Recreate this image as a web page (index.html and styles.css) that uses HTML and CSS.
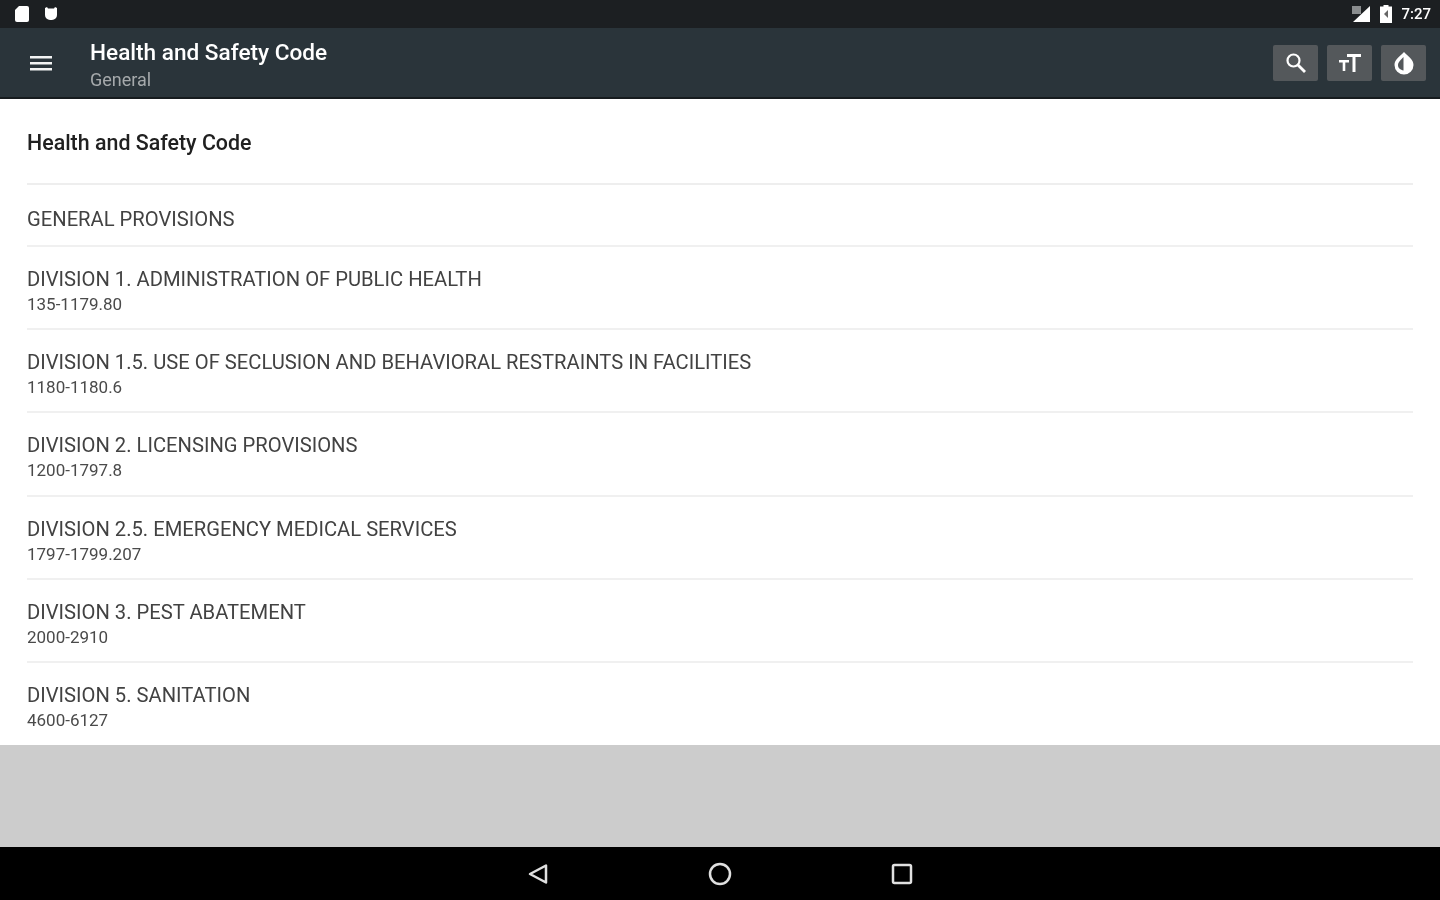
FILE: index.html
```html
<!DOCTYPE html>
<html lang="en">
<head>
    <meta charset="UTF-8">
    <meta name="viewport" content="width=device-width, initial-scale=1.0">
    <title>Health and Safety Code</title>
    <link rel="stylesheet" href="styles.css">
</head>
<body>
    <div class="screen">
        <!-- Status bar -->
        <div class="status-bar">
            <div class="status-left">
                <svg width="18" height="18" viewBox="0 0 18 18"><path d="M6 1h8a2 2 0 0 1 2 2v12a2 2 0 0 1-2 2H4a2 2 0 0 1-2-2V5z" fill="#fff"/></svg>
                <svg width="18" height="18" viewBox="0 0 18 18"><path d="M5 2l1 1.500h6L13 2l2 1v7a5 5 0 0 1-5 5H8a5 5 0 0 1-5-5V3z" fill="#fff"/></svg>
            </div>
            <div class="status-right">
                <svg width="20" height="18" viewBox="0 0 20 18"><path d="M19 1v16H2z" fill="#fff"/><rect x="1" y="1" width="9" height="8" fill="#8a8d8f"/></svg>
                <svg width="14" height="20" viewBox="0 0 14 20"><path d="M4.500 1h5v1.500H13V19H1V2.500h3.500z" fill="#fff"/><path d="M9 6v8L5 10z" fill="#666"/></svg>
                <span class="clock">7:27</span>
            </div>
        </div>

        <!-- Toolbar -->
        <header class="toolbar">
            <button class="menu-btn" aria-label="Menu">
                <svg width="22" height="18" viewBox="0 0 22 18"><path d="M0 2h22v2.500H0zM0 8h22v2.500H0zM0 14h22v2.500H0z" fill="#f2f3f3"/></svg>
            </button>
            <div class="toolbar-titles">
                <div class="toolbar-title">Health and Safety Code</div>
                <div class="toolbar-sub">General</div>
            </div>
            <div class="toolbar-actions">
                <button class="action-btn" aria-label="Search">
                    <svg width="24" height="24" viewBox="0 0 24 24"><circle cx="9.500" cy="9.500" r="6" fill="none" stroke="#fff" stroke-width="2.200"/><path d="M14 14l7 7" stroke="#fff" stroke-width="2.800"/></svg>
                </button>
                <button class="action-btn" aria-label="Text size">
                    <svg width="26" height="24" viewBox="0 0 26 24"><path d="M10 3h14v3h-5.500v15h-3V6H10z" fill="#fff"/><path d="M2 9h10v2.500H8.300V20H5.700v-8.500H2z" fill="#fff"/></svg>
                </button>
                <button class="action-btn" aria-label="Contrast">
                    <svg width="24" height="24" viewBox="0 0 24 24"><path d="M12 1c4.500 4.500 9.500 7.500 9.500 13a9.500 9.500 0 0 1-19 0c0-5.500 5-8.500 9.500-13z" fill="#fff"/><path d="M11.500 6c-2.500 2.800-5.500 5-5.500 8.300 0 2.700 2.500 4.700 5.500 5.200z" fill="#54585b"/></svg>
                </button>
            </div>
        </header>

        <!-- Code listing -->
        <main class="listing">
            <h1 class="listing-title">Health and Safety Code</h1>
            <ul class="rows">
                <li class="row row-single"><span class="row-name">GENERAL PROVISIONS</span></li>
                <li class="row"><span class="row-name">DIVISION 1. ADMINISTRATION OF PUBLIC HEALTH</span><span class="row-range">135-1179.80</span></li>
                <li class="row"><span class="row-name">DIVISION 1.5. USE OF SECLUSION AND BEHAVIORAL RESTRAINTS IN FACILITIES</span><span class="row-range">1180-1180.6</span></li>
                <li class="row"><span class="row-name">DIVISION 2. LICENSING PROVISIONS</span><span class="row-range">1200-1797.8</span></li>
                <li class="row"><span class="row-name">DIVISION 2.5. EMERGENCY MEDICAL SERVICES</span><span class="row-range">1797-1799.207</span></li>
                <li class="row"><span class="row-name">DIVISION 3. PEST ABATEMENT</span><span class="row-range">2000-2910</span></li>
                <li class="row"><span class="row-name">DIVISION 5. SANITATION</span><span class="row-range">4600-6127</span></li>
            </ul>
        </main>

        <div class="spacer"></div>

        <!-- Navigation bar -->
        <nav class="nav-bar">
            <svg width="24" height="24" viewBox="0 0 24 24"><path d="M20 3.500v17L4 12z" fill="none" stroke="#e0e0e0" stroke-width="2.500" stroke-linejoin="round"/></svg>
            <svg width="24" height="24" viewBox="0 0 24 24"><circle cx="12" cy="12" r="10" fill="none" stroke="#e0e0e0" stroke-width="2.500"/></svg>
            <svg width="24" height="24" viewBox="0 0 24 24"><rect x="3" y="3" width="18" height="18" rx="1.500" fill="none" stroke="#e0e0e0" stroke-width="2.500"/></svg>
        </nav>
    </div>
</body>
</html>
```

FILE: styles.css
```css
* {
    margin: 0;
    padding: 0;
    box-sizing: border-box;
    font-family: Roboto, 'Liberation Sans', sans-serif;
}

body {
    background-color: #cccccc;
    overflow: hidden;
}

.screen {
    height: 900px;
    display: flex;
    flex-direction: column;
    filter: blur(0.6px);
}

.status-bar {
    height: 28px;
    background-color: #1c1f22;
    display: flex;
    justify-content: space-between;
    align-items: center;
    padding: 0 9px 0 13px;
}

.status-left {
    display: flex;
    gap: 11px;
}

.status-right {
    display: flex;
    align-items: center;
    gap: 8px;
}

.clock {
    color: #ffffff;
    font-size: 15px;
    font-weight: 500;
}

.toolbar {
    height: 71px;
    background-color: #2a343a;
    border-bottom: 2px solid #161b1e;
    display: flex;
    align-items: center;
    padding: 0 14px 0 30px;
}

.menu-btn {
    width: 60px;
    background: none;
    border: none;
    display: flex;
}

.toolbar-titles {
    flex: 1;
    padding-top: 5px;
}

.toolbar-title {
    color: #ffffff;
    font-size: 22.6px;
    font-weight: 500;
    line-height: 28px;
    margin-top: -1px;
}

.toolbar-sub {
    color: #a5a9ab;
    font-size: 18px;
    line-height: 22px;
    margin-top: 2px;
}

.toolbar-actions {
    display: flex;
    gap: 9px;
    margin-top: 1px;
}

.action-btn {
    width: 45px;
    height: 36px;
    background-color: #54585b;
    border: none;
    border-radius: 2px;
    display: flex;
    justify-content: center;
    align-items: center;
}

.listing {
    background-color: #ffffff;
    padding: 0 27px;
}

.listing-title {
    height: 86px;
    border-bottom: 2px solid #eeeeee;
    color: #202020;
    font-size: 21.4px;
    font-weight: 500;
    line-height: 87px;
}

.rows {
    list-style: none;
}

.row {
    height: 83.2px;
    padding-top: 19px;
    border-bottom: 2px solid #f0f0f0;
    display: flex;
    flex-direction: column;
}

.row:last-child {
    height: 82px;
    border-bottom: none;
}

.row-single {
    height: 62px;
    padding-top: 21px;
}

.row-name {
    color: #424242;
    font-size: 20.2px;
    line-height: 26px;
}

.row-range {
    color: #4a4a4a;
    font-size: 17px;
    line-height: 20px;
    margin-top: 2px;
}

.spacer {
    flex: 1;
    background-color: #cccccc;
}

.nav-bar {
    height: 53px;
    background-color: #000000;
    display: flex;
    justify-content: center;
    align-items: center;
    gap: 158px;
}
```
